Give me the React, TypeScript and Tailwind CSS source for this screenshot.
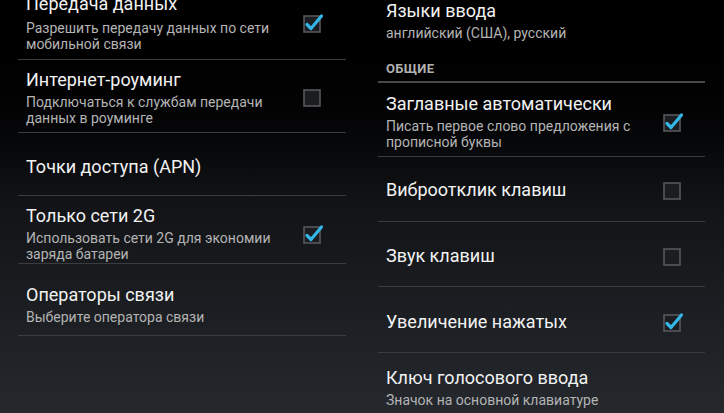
import React from "react";

const Check = ({ on }: { on: boolean }) => (
  <svg width="22" height="22" viewBox="0 0 22 22" className="shrink-0">
    <rect x="1" y="4" width="16" height="16" fill="#1b1d20" stroke="#55585c" strokeWidth="1.6" />
    {on && (
      <path d="M4 12.5 L8 16.5 L18.5 4" fill="none" stroke="#33b5e5" strokeWidth="3.2" strokeLinecap="round" strokeLinejoin="round" />
    )}
  </svg>
);

type RowProps = {
  title: string;
  sub?: string[];
  check?: boolean;
  h: string;
  extra?: string;
  border?: boolean;
  subGap?: string;
};

const Row = ({ title, sub, check, h, extra = "", border = true, subGap = "mt-[3px]" }: RowProps) => (
  <div className={`flex items-center pl-2 ${h} ${extra} ${border ? "border-b border-[#3a3c40]" : ""}`}>
    <div className="flex-1 flex flex-col">
      <div className="text-[18px] leading-[22px] text-[#f2f2f2]">{title}</div>
      {sub && (
        <div className={`${subGap} text-[14px] leading-[16px] text-[#b4b4b4]`}>
          {sub.map((s, i) => (
            <div key={i}>{s}</div>
          ))}
        </div>
      )}
    </div>
    {check !== undefined && <Check on={check} />}
  </div>
);

export default function App() {
  return (
    <div
      className="w-[724px] h-[413px] overflow-hidden flex bg-gradient-to-b from-[#000000] via-[#121417] to-[#25282d]"
      style={{ fontFamily: "Roboto, 'Noto Sans', sans-serif" }}
    >
      <div className="w-[362px] pl-[18px] pr-[16px] flex flex-col">
        <Row title="Передача данных" sub={["Разрешить передачу данных по сети", "мобильной связи"]} check={true} h="h-[78px] shrink-0" extra="-mt-[18px] pt-[4px] pr-[21px]" subGap="mt-[5px]" />
        <Row title="Интернет-роуминг" sub={["Подключаться к службам передачи", "данных в роуминге"]} check={false} h="h-[73px] shrink-0" extra="pt-[2px] pr-[21px]" />
        <Row title="Точки доступа (APN)" h="h-[63px] shrink-0" extra="pt-[5px]" />
        <Row title="Только сети 2G" sub={["Использовать сети 2G для экономии", "заряда батареи"]} check={true} h="h-[68px] shrink-0" extra="pt-[8px] pr-[21px]" />
        <Row title="Операторы связи" sub={["Выберите оператора связи"]} h="h-[72px] shrink-0" extra="pt-[10px]" />
      </div>
      <div className="w-[362px] pl-[16px] pr-[19px] flex flex-col">
        <Row title="Языки ввода" sub={["английский (США), русский"]} h="h-[66px] shrink-0" extra="-mt-[16px] pt-[6px]" border={false} />
        <div className="h-[33px] shrink-0 flex items-center pl-2 pt-[6px] border-b-2 border-[#45474b] text-[13px] font-bold text-[#b0b0b0] tracking-[0.3px]">
          ОБЩИЕ
        </div>
        <Row title="Заглавные автоматически" sub={["Писать первое слово предложения с", "прописной буквы"]} check={true} h="h-[74px] shrink-0" extra="pt-[4px] pr-[20px]" />
        <Row title="Виброотклик клавиш" check={false} h="h-[65px] shrink-0" extra="pt-[2px] pr-[20px]" />
        <Row title="Звук клавиш" check={false} h="h-[65px] shrink-0" extra="pt-[4px] pr-[20px]" />
        <Row title="Увеличение нажатых" check={true} h="h-[66px] shrink-0" extra="pt-[4px] pr-[20px]" />
        <Row title="Ключ голосового ввода" sub={["Значок на основной клавиатуре"]} h="h-[66px] shrink-0" extra="pt-[2px]" border={false} />
      </div>
    </div>
  );
}
